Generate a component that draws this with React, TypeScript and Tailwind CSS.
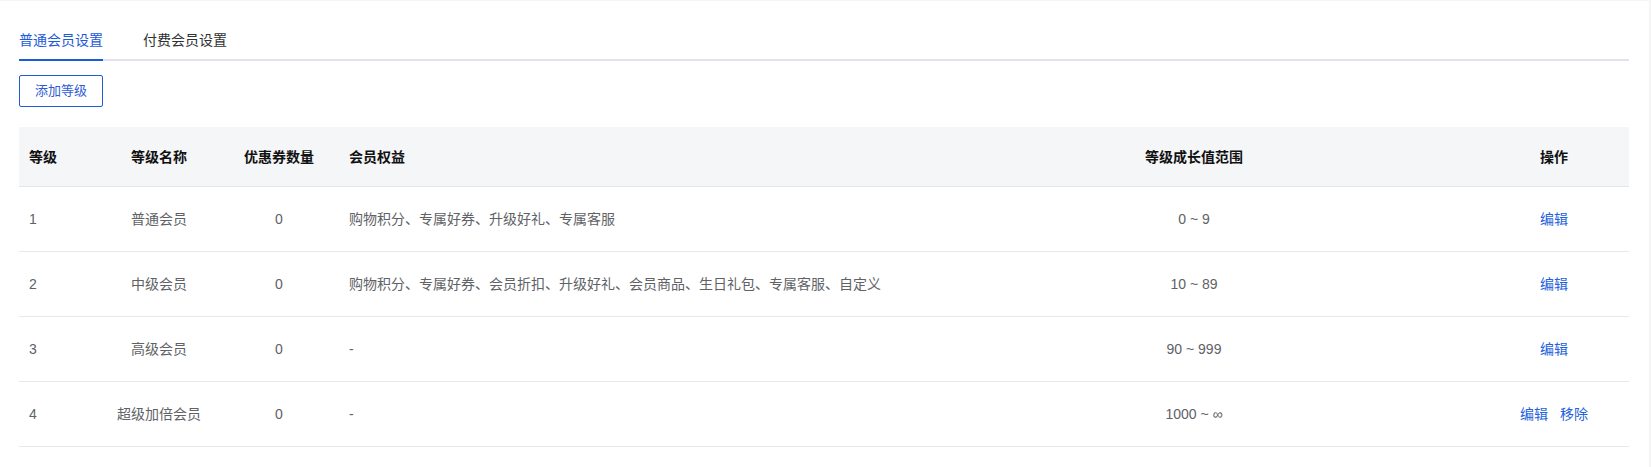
import React from "react";

const font = '"Liberation Sans", "Noto Sans CJK SC", "Noto Sans", sans-serif';

const rows = [
  { lv: "1", name: "普通会员", n: "0", rights: "购物积分、专属好券、升级好礼、专属客服", range: "0 ~ 9", del: false },
  { lv: "2", name: "中级会员", n: "0", rights: "购物积分、专属好券、会员折扣、升级好礼、会员商品、生日礼包、专属客服、自定义", range: "10 ~ 89", del: false },
  { lv: "3", name: "高级会员", n: "0", rights: "-", range: "90 ~ 999", del: false },
  { lv: "4", name: "超级加倍会员", n: "0", rights: "-", range: "1000 ~ ∞", del: true },
];

export default function App() {
  return (
    <div className="min-h-[467px] bg-[#f5f5f6] pt-px pr-[2px]" style={{ fontFamily: font }}>
      <div className="bg-white pl-[19px] pr-[20px] pt-[19px] pb-[20px] min-h-[466px]">
        <div className="flex gap-[40px] border-b-2 border-[#e0e3ed]">
          <div className="h-[41px] -mb-[2px] flex items-center border-b-2 border-[#1d5ad8] text-[14px] leading-[20px] text-[#1d5ad8]">
            普通会员设置
          </div>
          <div className="h-[41px] -mb-[2px] flex items-center border-b-2 border-transparent text-[14px] leading-[20px] text-[#303133]">
            付费会员设置
          </div>
        </div>
        <button className="mt-[14px] w-[84px] h-[32px] flex items-center justify-center rounded-[2px] border border-[#1f5cd8] bg-white text-[13px] leading-[20px] text-[#2f5bd6]">
          添加等级
        </button>
        <div className="mt-[20px] w-[1610px]">
          <div className="grid grid-cols-[80px_120px_120px_570px_570px_150px] h-[60px] bg-[#f5f6f8] border-b border-[#e3e6ec] text-[14px] leading-[20px] font-bold text-[#111]">
            <div className="flex items-center pl-[10px]">等级</div>
            <div className="flex items-center justify-center">等级名称</div>
            <div className="flex items-center justify-center">优惠券数量</div>
            <div className="flex items-center pl-[10px]">会员权益</div>
            <div className="flex items-center justify-center">等级成长值范围</div>
            <div className="flex items-center justify-center">操作</div>
          </div>
          {rows.map((r) => (
            <div
              key={r.lv}
              className="grid grid-cols-[80px_120px_120px_570px_570px_150px] h-[65px] border-b border-[#e6e8ee] text-[14px] leading-[20px] text-[#606266]"
            >
              <div className="flex items-center pl-[10px]">{r.lv}</div>
              <div className="flex items-center justify-center">{r.name}</div>
              <div className="flex items-center justify-center">{r.n}</div>
              <div className="flex items-center pl-[10px]">{r.rights}</div>
              <div className="flex items-center justify-center">{r.range}</div>
              <div className="flex items-center justify-center gap-[12px] text-[#2461dc]">
                <span>编辑</span>
                {r.del && <span>移除</span>}
              </div>
            </div>
          ))}
        </div>
      </div>
    </div>
  );
}
